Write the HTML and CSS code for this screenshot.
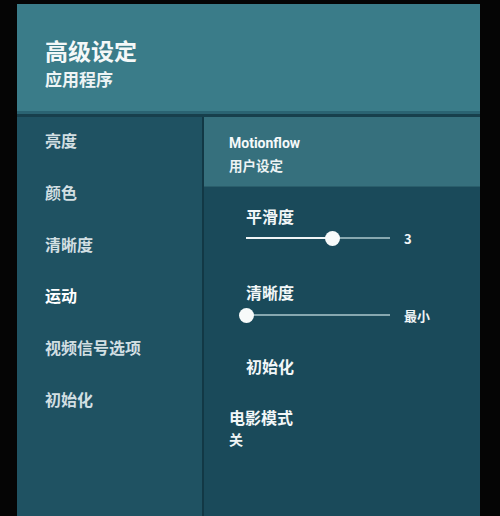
FILE: index.html
```html
<!DOCTYPE html>
<html>
<head>
<meta charset="utf-8">
<link rel="stylesheet" href="styles.css">
</head>
<body>
<div class="screen">
  <div class="header">
    <div class="title">高级设定</div>
    <div class="subtitle">应用程序</div>
  </div>
  <div class="main">
    <div class="menu">
      <div class="menu-item">亮度</div>
      <div class="menu-item">颜色</div>
      <div class="menu-item">清晰度</div>
      <div class="menu-item active">运动</div>
      <div class="menu-item">视频信号选项</div>
      <div class="menu-item">初始化</div>
    </div>
    <div class="divider"></div>
    <div class="panel">
      <div class="focus">
        <div class="focus-title">Motionflow</div>
        <div class="focus-sub">用户设定</div>
      </div>
      <div class="sub first">
        <div class="sub-label">平滑度</div>
        <div class="slider-row">
          <div class="track"><div class="fill" style="width:60%"></div><div class="thumb" style="left:60%"></div></div>
          <div class="value">3</div>
        </div>
      </div>
      <div class="sub second">
        <div class="sub-label">清晰度</div>
        <div class="slider-row">
          <div class="track"><div class="fill" style="width:0%"></div><div class="thumb" style="left:0%"></div></div>
          <div class="value">最小</div>
        </div>
      </div>
      <div class="sub third">
        <div class="sub-label">初始化</div>
      </div>
      <div class="item">
        <div class="item-title">电影模式</div>
        <div class="item-sub">关</div>
      </div>
    </div>
  </div>
</div>
</body>
</html>
```
FILE: styles.css
```css
html, body {
  margin: 0;
  padding: 0;
  background: #050505;
  width: 500px;
  height: 516px;
  overflow: hidden;
}
body {
  font-family: "Noto Sans CJK SC", "Noto Sans", sans-serif;
  color: #e6eef0;
}
.screen {
  margin-left: 17px;
  padding-top: 4px;
  width: 463px;
  height: 512px;
  display: flex;
  flex-direction: column;
}
.header {
  height: 110px;
  background: #3a7c89;
  border-bottom: 3px solid #2a6372;
  box-sizing: border-box;
  padding: 29px 0 0 28px;
  flex-shrink: 0;
}
.title {
  font-size: 23px;
  font-weight: 700;
  line-height: 34px;
  color: #f4f8f8;
}
.subtitle {
  font-size: 17px;
  font-weight: 700;
  line-height: 24px;
  color: #eef4f5;
}
.main {
  flex: 1;
  display: flex;
  padding-top: 3px;
  background: #173f4c;
}
.menu {
  width: 185px;
  background: #1f5262;
  padding-top: 12px;
  box-sizing: border-box;
}
.menu-item {
  height: 51.8px;
  line-height: 22px;
  padding-left: 28px;
  font-size: 16px;
  font-weight: 700;
  color: #d2dfe2;
}
.menu-item.active {
  color: #ffffff;
}
.divider {
  width: 2px;
  background: #123845;
}
.panel {
  flex: 1;
  background: #1a4a5a;
}
.focus {
  height: 70px;
  background: #36707d;
  box-sizing: border-box;
  padding: 15px 0 0 25px;
  border-bottom: 1px solid #2a5e6b;
}
.focus-title {
  font-family: "Roboto", "Noto Sans", sans-serif;
  font-size: 14px;
  font-weight: 700;
  line-height: 22px;
  color: #f5f9fa;
}
.focus-sub {
  font-size: 13.5px;
  font-weight: 700;
  line-height: 22px;
  color: #edf3f4;
}
.sub {
  padding-left: 42px;
}
.sub.first {
  margin-top: 18px;
}
.sub.second {
  margin-top: 34px;
}
.sub.third {
  margin-top: 31px;
}
.sub-label {
  font-size: 16px;
  font-weight: 700;
  line-height: 22px;
  color: #f2f7f8;
}
.slider-row {
  display: flex;
  align-items: center;
  height: 18px;
  margin-top: 2px;
}
.sub.second .slider-row {
  margin-top: 3px;
}
.track {
  position: relative;
  width: 144px;
  height: 2px;
  background: #87a8b0;
}
.fill {
  height: 100%;
  background: #f0f5f6;
}
.thumb {
  position: absolute;
  top: 50%;
  width: 15px;
  height: 15px;
  margin-left: -7.5px;
  margin-top: -7.5px;
  border-radius: 50%;
  background: #f7fafa;
}
.value {
  margin-left: 14px;
  font-size: 13px;
  font-weight: 700;
  color: #f0f5f6;
}
.item {
  padding-left: 25px;
  margin-top: 29px;
}
.item-title {
  font-size: 16px;
  font-weight: 700;
  line-height: 22px;
  color: #f2f7f8;
}
.item-sub {
  font-size: 14px;
  font-weight: 700;
  line-height: 22px;
  color: #edf3f4;
}
```
